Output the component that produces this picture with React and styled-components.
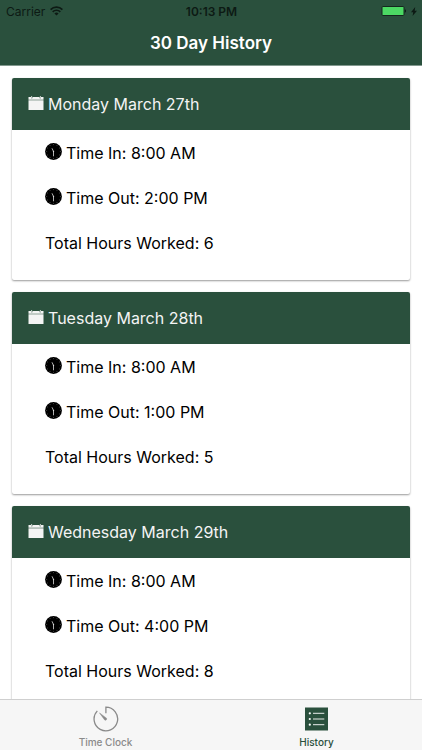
import React from 'react'
import styled, { createGlobalStyle, ThemeProvider } from 'styled-components'

const theme = {
  green: '#2a503d',
  gray: '#8a8a8a',
  bar: '#f6f6f6',
  light: '#f4f4f4'
}

const days = [
  { date: 'Monday March 27th', timeIn: '8:00 AM', timeOut: '2:00 PM', total: 6 },
  { date: 'Tuesday March 28th', timeIn: '8:00 AM', timeOut: '1:00 PM', total: 5 },
  { date: 'Wednesday March 29th', timeIn: '8:00 AM', timeOut: '4:00 PM', total: 8 }
]

const GlobalStyle = createGlobalStyle`
  * {
    box-sizing: border-box;
  }

  body {
    margin: 0;
    background: #fff;
    color: #000;
    font-family: Inter, 'Liberation Sans', sans-serif;
  }

  h1, h2, p, ul {
    margin: 0;
    padding: 0;
  }
`

const Root = styled.div`
  display: flex;
  flex-direction: column;
  height: 100vh;
`

const Header = styled.header`
  flex: none;
  background: ${(p) => p.theme.green};
  border-bottom: 1px solid #82988e;
`

const StatusBar = styled.div`
  display: grid;
  grid-template-columns: 1fr auto 1fr;
  align-items: center;
  height: 22px;
  padding: 0 5px 0 6px;
  font-size: 12px;
  color: #0d1a14;
`

const StatusGroup = styled.div`
  display: flex;
  align-items: center;
  justify-content: ${(p) => (p.$end ? 'flex-end' : 'flex-start')};
  gap: 5px;
`

const Clock = styled.time`
  font-weight: 600;
`

const Title = styled.h1`
  font-size: 17px;
  font-weight: 600;
  line-height: 43px;
  text-align: center;
  color: #fff;
`

const Content = styled.main`
  display: flex;
  flex: 1;
  flex-direction: column;
  gap: 12px;
  min-height: 0;
  padding: 12px;
  overflow-y: auto;
  scrollbar-width: none;
`

const Card = styled.article`
  flex: none;
  padding-bottom: 15px;
  overflow: hidden;
  border-radius: 2px;
  box-shadow: 0 1px 2px rgba(0, 0, 0, 0.4);
`

const CardHeader = styled.header`
  display: flex;
  align-items: center;
  gap: 4px;
  height: 52px;
  padding: 0 16px;
  background: ${(p) => p.theme.green};
  color: ${(p) => p.theme.light};

  svg {
    margin-bottom: 2px;
  }
`

const CardTitle = styled.h2`
  font-size: 16px;
  font-weight: 400;
`

const Entries = styled.ul`
  padding: 0 33px;
  list-style: none;
`

const Entry = styled.li`
  display: flex;
  align-items: center;
  gap: 4px;
  height: 45px;
  font-size: 16px;

  svg {
    margin-bottom: 2px;
  }
`

const TabBar = styled.nav`
  display: flex;
  flex: none;
  height: 51px;
  border-top: 1px solid #cfcfcf;
  background: ${(p) => p.theme.bar};
`

const Tab = styled.a`
  display: flex;
  flex: 1;
  flex-direction: column;
  align-items: center;
  gap: 3px;
  padding-top: 6px;
  font-size: 10px;
  font-weight: 500;
  line-height: 14px;
  text-decoration: none;
  color: ${(p) => (p.$active ? p.theme.green : p.theme.gray)};
`

const WifiIcon = () => (
  <svg width="13" height="10" viewBox="0 0 13 10" fill="none" stroke="currentColor" strokeWidth="1.7" aria-hidden="true">
    <path d="M0.6 3.6a8.4 8.4 0 0 1 11.8 0" />
    <path d="M2.7 5.8a5.4 5.4 0 0 1 7.6 0" />
    <path d="M6.5 9.6 4.4 7.5a3 3 0 0 1 4.2 0z" fill="currentColor" stroke="none" />
  </svg>
)

const BatteryIcon = () => (
  <svg width="25" height="10" viewBox="0 0 25 10" aria-hidden="true">
    <rect x="1" y="0.5" width="22" height="9" rx="1" fill="#4cd964" stroke="#14271e" />
    <path d="M23.8 3.3c1.6.3 1.6 3.1 0 3.4z" fill="#0d1a14" />
  </svg>
)

const BoltIcon = () => (
  <svg width="6" height="9" viewBox="0 0 6 9" fill="#0d1a14" aria-hidden="true">
    <path d="M4.2 0 0 5.2h2.2L1.6 9 6 3.7H3.7z" />
  </svg>
)

const CalendarIcon = () => (
  <svg width="16" height="16" viewBox="0 0 16 16" fill="currentColor" aria-hidden="true">
    <path d="M0.5 2H3v1.2h1.4V2h7.2v1.2H13V2h2.5v2.8h-15z" />
    <path d="M3.3 1h.8v1.9h-.8zM11.9 1h.8v1.9h-.8z" />
    <path d="M0.5 5.3h15v9.7h-15z" />
  </svg>
)

const ticks = Array.from({ length: 12 }, (_, i) => i * 30)

const ClockIcon = () => (
  <svg width="17" height="17" viewBox="0 0 17 17" aria-hidden="true">
    <circle cx="8.5" cy="8.5" r="8.4" fill="#000" />
    {ticks.map((angle) => (
      <path key={angle} d="M8.5 1.2v.9" stroke="#777" strokeWidth="0.6" transform={`rotate(${angle} 8.5 8.5)`} />
    ))}
    <path d="M7 5.3l1.5 3.2v4.8" fill="none" stroke="#ddd" strokeWidth="0.8" />
    <circle cx="8.5" cy="8.5" r="0.7" fill="#ddd" />
  </svg>
)

const TimerIcon = () => (
  <svg width="26" height="26" viewBox="0 0 26 26" fill="none" stroke="currentColor" aria-hidden="true">
    <path d="M12.9 7.2V1.2A11.8 11.8 0 1 1 4.3 4.9" strokeWidth="1.3" />
    <path d="M6.5 6.9 13.5 12.2a1.3 1.3 0 0 1-1.8 1.8z" fill="currentColor" strokeWidth="0.5" />
  </svg>
)

const ListIcon = () => (
  <svg width="26" height="26" viewBox="0 0 26 26" aria-hidden="true">
    <path d="M1 1.5h23v23H1z" fill="currentColor" />
    {[7.3, 13, 18.7].map((y) => (
      <g key={y}>
        <circle cx="5.8" cy={y} r="1.1" fill="#fff" />
        <path d={`M9 ${y}h11.3`} stroke="#fff" strokeWidth="0.9" />
      </g>
    ))}
  </svg>
)

const DayCard = ({ day }) => (
  <Card>
    <CardHeader>
      <CalendarIcon />
      <CardTitle>{day.date}</CardTitle>
    </CardHeader>
    <Entries>
      <Entry>
        <ClockIcon />
        Time In: {day.timeIn}
      </Entry>
      <Entry>
        <ClockIcon />
        Time Out: {day.timeOut}
      </Entry>
      <Entry>Total Hours Worked: {day.total}</Entry>
    </Entries>
  </Card>
)

const App = () => (
  <ThemeProvider theme={theme}>
    <GlobalStyle />
    <Root>
      <Header>
        <StatusBar>
          <StatusGroup>
            Carrier
            <WifiIcon />
          </StatusGroup>
          <Clock>10:13 PM</Clock>
          <StatusGroup $end>
            <BatteryIcon />
            <BoltIcon />
          </StatusGroup>
        </StatusBar>
        <Title>30 Day History</Title>
      </Header>
      <Content>
        {days.map((day) => (
          <DayCard key={day.date} day={day} />
        ))}
      </Content>
      <TabBar>
        <Tab href="#clock">
          <TimerIcon />
          Time Clock
        </Tab>
        <Tab href="#history" aria-current="page" $active>
          <ListIcon />
          History
        </Tab>
      </TabBar>
    </Root>
  </ThemeProvider>
)

export default App
